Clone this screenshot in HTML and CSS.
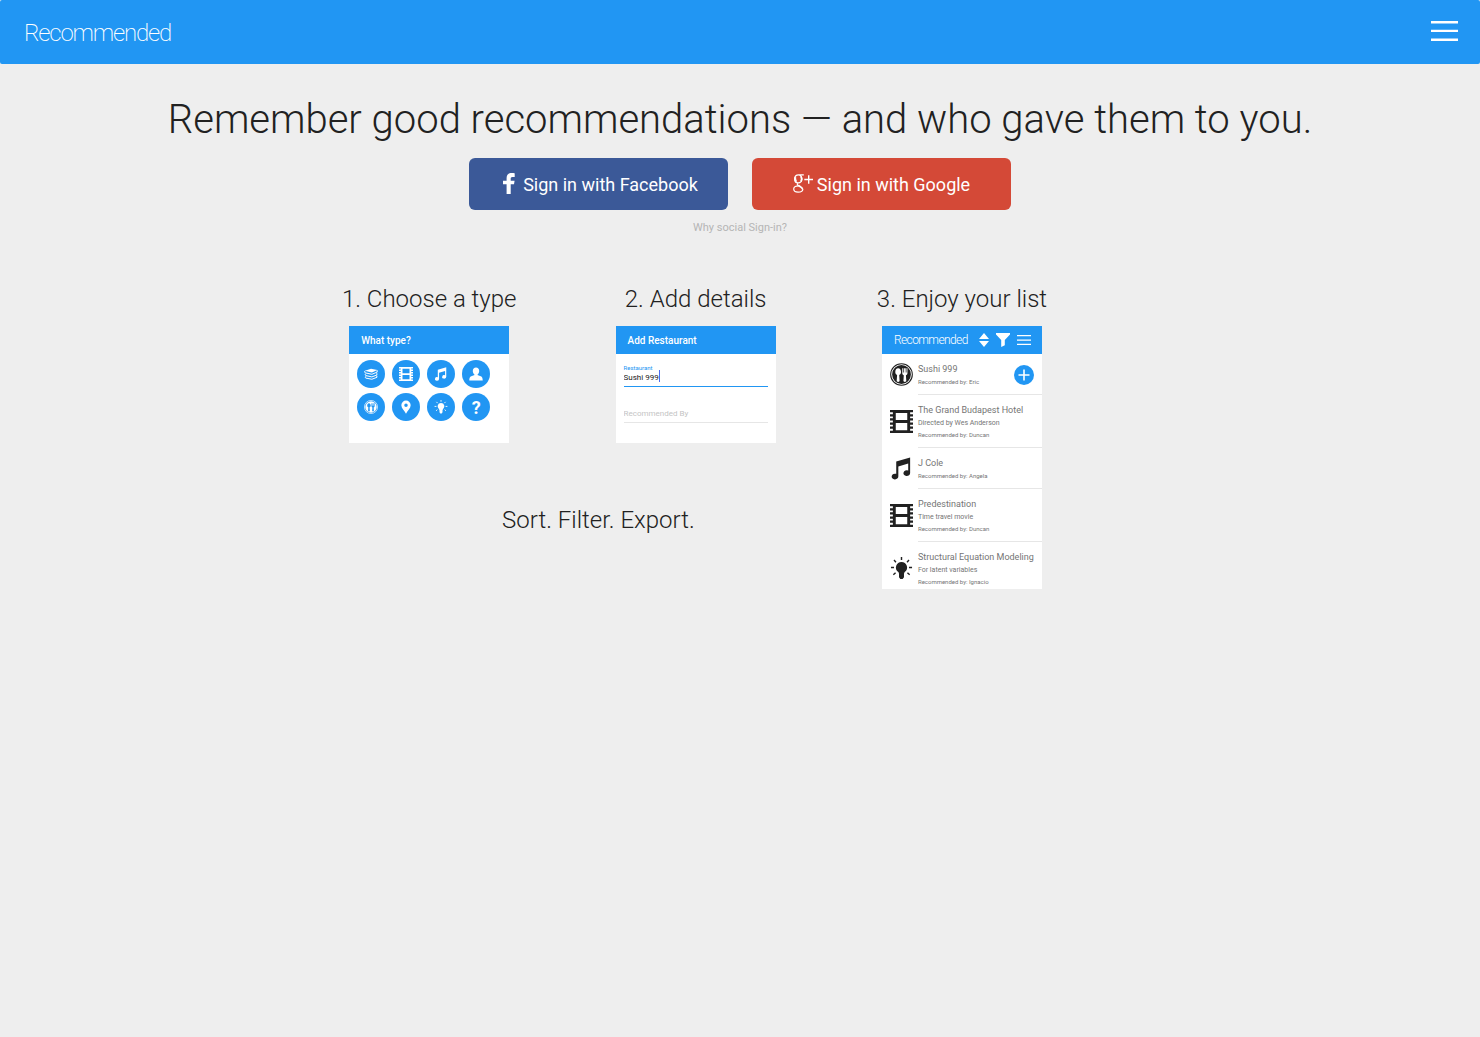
FILE: index.html
```html
<!DOCTYPE html>
<html lang="en">
<head>
<meta charset="utf-8">
<meta name="viewport" content="width=device-width, initial-scale=1">
<title>Recommended</title>
<link rel="stylesheet" href="styles.css">
</head>
<body>
<svg class="sprite" aria-hidden="true">
  <symbol id="film" viewBox="0 0 24 24"><path fill="currentColor" fill-rule="evenodd" d="M0 0h24v24H0zM6 3v7.500h12V3zM6 13.500v7.500h12v-7.500zM0 2.400v2h3v-2zM0 6.700v2h3v-2zM0 11v2h3v-2zM0 15.300v2h3v-2zM0 19.600v2h3v-2zM21 2.400v2h3v-2zM21 6.700v2h3v-2zM21 11v2h3v-2zM21 15.300v2h3v-2zM21 19.600v2h3v-2z"/></symbol>
  <symbol id="music" viewBox="0 0 24 24"><path fill="currentColor" d="M6.500 4.800 21 .5v16.300a3.500 3 0 1 1-2-2.600V6.700L8.700 9.800v10.400a3.500 3 0 1 1-2.200-2.600z"/></symbol>
  <symbol id="bulb" viewBox="0 0 24 24"><path fill="currentColor" d="M12 5.200a5.800 5.800 0 0 1 3.400 10.500c-.7.700-.8 1.500-.8 2.300v3l-1.400 2h-2.400l-1.400-2v-3c0-.8-.1-1.600-.8-2.300A5.800 5.800 0 0 1 12 5.200z"/><path stroke="currentColor" stroke-width="1.500" fill="none" d="M12 0v3M4.200 3.200l2 2.200M19.800 3.200l-2 2.200M1 11h3.200M19.800 11H23M3.500 18.500l2.300-2M20.500 18.500l-2.300-2"/></symbol>
  <symbol id="dining" viewBox="0 0 24 24"><circle cx="12" cy="12" r="11.300" fill="none" stroke="currentColor" stroke-width="1.100"/><path fill="currentColor" fill-rule="evenodd" d="M12 2.200a9.800 9.800 0 1 1 0 19.600 9.800 9.800 0 0 1 0-19.600zM8.500 5.500c-1.900 0-3 1.800-3 3.800 0 1.600.8 2.700 1.900 3.200l-.4 6.100c0 1.600 3 1.600 3 0l-.4-6.100c1.100-.5 1.900-1.600 1.900-3.200 0-2-1.100-3.800-3-3.800zM12.800 5.500v5.200c0 1.100.7 1.700 1.600 2l-.4 5.900c0 1.600 3 1.600 3 0l-.4-5.900c.9-.3 1.600-.9 1.600-2V5.500h-1v4.300h-.8V5.500h-1.700v4.300h-.8V5.500z"/></symbol>
  <symbol id="books" viewBox="0 0 24 24"><path fill="currentColor" d="M1.500 6.500 12 3l11 2.300-9.500 4.200z"/><path fill="none" stroke="currentColor" stroke-width="1.700" d="M2 6.500q-2 2 0 3.500l11.500 2.500 9.500-4M3 11.500q-2 2 0 3.200l10.500 2.300 9-3.500M3 16q-1.500 2 0 3l10.500 2 9-3.500M22.500 5.500v3M22 10.500v3M22 15v2.500"/></symbol>
  <symbol id="person" viewBox="0 0 24 24"><path fill="currentColor" d="M12 1c3.300 0 5.500 2.500 5.500 6 0 2.600-1.300 5-3 6.100v.8l5.600 2.100c2.600 1 3.400 3.400 3.400 7H.5c0-3.600.8-6 3.400-7l5.600-2.100v-.8C7.800 12 6.500 9.600 6.500 7c0-3.500 2.200-6 5.500-6z"/></symbol>
  <symbol id="place" viewBox="0 0 24 24"><path fill="currentColor" fill-rule="evenodd" d="M12 1a8 8 0 0 1 8 8c0 5-5.500 9.500-8 14.500C9.500 18.500 4 14 4 9a8 8 0 0 1 8-8zm0 5a3 3 0 1 0 0 6 3 3 0 0 0 0-6z"/></symbol>
</svg>

<header class="topbar">
  <a class="brand" href="#">Recommended</a>
  <button class="menu" type="button" aria-label="Menu">
    <svg width="27" height="21" viewBox="0 0 27 21"><path fill="#fff" d="M0 0h27v2.400H0zM0 8.700h27v2.400H0zM0 17.600h27V20H0z"/></svg>
  </button>
</header>

<main>
  <h1 class="headline">Remember good recommendations — and who gave them to you.</h1>
  <div class="signin">
    <button class="social facebook" type="button">
      <svg width="12" height="21" viewBox="0 0 12 21" aria-hidden="true"><path fill="#fff" d="M11.700.3v3.600H9.400C8 3.900 7.700 4.600 7.700 5.700v2h3.900l-.6 3.600H7.700V21H3.600v-9.700H0V7.700h3.600V4.900C3.600 1.700 5.500 0 8.600 0c1.400 0 2.600.1 3.100.3z"/></svg>
      Sign in with Facebook
    </button>
    <button class="social google" type="button">
      <svg width="20" height="19" viewBox="0 0 20 19" aria-hidden="true"><g fill="none" stroke="#fff"><path stroke-width="1.200" d="M10.800.9H5.600C3.200.9 1.600 2.600 1.600 5c0 2.200 1.500 3.900 3.500 3.900 2.200 0 3.700-1.500 3.700-3.800C8.800 3 7.500.9 5.600.9M5.300 8.900c-1.500 1.200-1.200 2 .2 2.900"/><path stroke-width="1.800" d="M2.300 3.200c-.3 1.700 0 3.400 1 4.600M8 2.400c.8 1.500.9 3.600 0 5M5.200 11.300c2 1.500 4.300 1.900 4.300 3.900"/><path stroke-width="1.200" d="M6 11.800c-3-.1-5.300.9-5.300 3.300 0 1.900 1.800 3.100 4.400 3.100 2.800 0 4.700-1.200 4.700-3.200"/><path stroke-width="1.400" d="M11.300 5.500H20M15.700 1.300v8.500"/></g></svg>
      Sign in with Google
    </button>
  </div>
  <a class="why" href="#">Why social Sign-in?</a>

  <div class="steps">
    <section class="step">
      <h2>1. Choose a type</h2>
      <div class="shot">
        <div class="shot-bar">What type?</div>
        <div class="types">
          <button type="button" aria-label="Book"><svg><use href="#books"/></svg></button>
          <button type="button" aria-label="Movie"><svg><use href="#film"/></svg></button>
          <button type="button" aria-label="Music"><svg><use href="#music"/></svg></button>
          <button type="button" aria-label="Person"><svg><use href="#person"/></svg></button>
          <button type="button" aria-label="Restaurant"><svg><use href="#dining"/></svg></button>
          <button type="button" aria-label="Place"><svg><use href="#place"/></svg></button>
          <button type="button" aria-label="Idea"><svg><use href="#bulb"/></svg></button>
          <button type="button" aria-label="Other">?</button>
        </div>
      </div>
    </section>

    <section class="step">
      <h2>2. Add details</h2>
      <div class="shot">
        <div class="shot-bar">Add Restaurant</div>
        <form class="details">
          <label for="restaurant">Restaurant</label>
          <div class="entry"><input id="restaurant" type="text" value="Sushi 999"><span class="caret"></span></div>
          <input class="by" type="text" placeholder="Recommended By" aria-label="Recommended By">
        </form>
      </div>
    </section>

    <section class="step list-step">
      <h2>3. Enjoy your list</h2>
      <div class="shot tall">
        <div class="shot-bar app">
          <span class="shot-brand">Recommended</span>
          <svg width="10" height="14" viewBox="0 0 10 14" aria-hidden="true"><path fill="#fff" d="M5 0l5 6H0zM5 14l5-6H0z"/></svg>
          <svg width="14" height="14" viewBox="0 0 14 14" aria-hidden="true"><path fill="#fff" d="M0 0h14v1.500L8.800 7v5.200L5.200 14V7L0 1.500z"/></svg>
          <svg width="14" height="12" viewBox="0 0 14 12" aria-hidden="true"><path fill="#fff" d="M0 1h14v1.300H0zM0 5.400h14v1.300H0zM0 9.800h14v1.300H0z"/></svg>
        </div>
        <ul class="items">
          <li>
            <svg><use href="#dining"/></svg>
            <div class="info"><h3>Sushi 999</h3><p class="by-line">Recommended by: Eric</p></div>
            <button class="add" type="button" aria-label="Add"><svg viewBox="0 0 20 20"><path stroke="#fff" stroke-width="1.600" d="M10 4.500v11M4.500 10h11"/></svg></button>
          </li>
          <li>
            <svg><use href="#film"/></svg>
            <div class="info"><h3>The Grand Budapest Hotel</h3><p>Directed by Wes Anderson</p><p class="by-line">Recommended by: Duncan</p></div>
          </li>
          <li>
            <svg><use href="#music"/></svg>
            <div class="info"><h3>J Cole</h3><p class="by-line">Recommended by: Angela</p></div>
          </li>
          <li>
            <svg><use href="#film"/></svg>
            <div class="info"><h3>Predestination</h3><p>Time travel movie</p><p class="by-line">Recommended by: Duncan</p></div>
          </li>
          <li>
            <svg><use href="#bulb"/></svg>
            <div class="info"><h3>Structural Equation Modeling</h3><p>For latent variables</p><p class="by-line">Recommended by: Ignacio</p></div>
          </li>
        </ul>
      </div>
    </section>

    <h2 class="extras">Sort. Filter. Export.</h2>
  </div>
</main>
</body>
</html>
```
FILE: styles.css
```css
* { box-sizing: border-box; }

body {
  margin: 0;
  background: #eee;
  color: #212121;
  font-family: Roboto, "Liberation Sans", sans-serif;
}

h1, h2, h3, p, ul { margin: 0; padding: 0; font-weight: 300; }
button, input { font-family: inherit; border: 0; padding: 0; margin: 0; }
button { cursor: pointer; }
a { text-decoration: none; }

.sprite { display: none; }

.topbar {
  display: flex;
  align-items: center;
  justify-content: space-between;
  height: 64px;
  padding: 0 22px 0 24px;
  background: #2196f3;
  border-radius: 2px;
}
.brand {
  padding-top: 2px;
  color: #fff;
  font-size: 24px;
  font-weight: 200;
  letter-spacing: -0.05em;
}
.menu { display: flex; padding-bottom: 2px; background: none; }

main { padding-top: 29px; text-align: center; }
.headline { font-size: 40px; line-height: 54px; }

.signin {
  display: flex;
  justify-content: center;
  gap: 24px;
  margin-top: 11px;
}
.social {
  display: flex;
  align-items: center;
  justify-content: center;
  width: 17.5%;
  min-width: 240px;
  height: 52px;
  border-radius: 6px;
  color: #fff;
  font-size: 18px;
}
.social svg { margin-bottom: 2px; }
.facebook { gap: 8px; padding-left: 4px; background: #3b5998; }
.google { gap: 4px; background: #d44937; }

.why {
  display: block;
  margin-top: 11px;
  color: #b5b5b5;
  font-size: 11px;
  line-height: 14px;
}

.steps {
  display: grid;
  grid-template-columns: repeat(3, 30%);
  grid-template-rows: auto 1fr;
  width: 60%;
  min-width: 640px;
  margin: 45px auto 0;
}
.steps h2 { font-size: 24px; line-height: 38px; }
.list-step { grid-column: 3; grid-row: 1 / 3; }
.extras { grid-column: 1 / 3; grid-row: 2; padding: 58px 0 0 72px; }

.shot {
  width: 160px;
  height: 117px;
  margin: 8px auto 0;
  overflow: hidden;
  background: #fff;
  text-align: left;
}
.tall { height: 263px; }
.shot-bar {
  display: flex;
  align-items: center;
  height: 28px;
  padding: 0 12px;
  background: #2196f3;
  color: #fff;
  font-size: 10px;
  font-weight: 500;
}

.types {
  display: grid;
  grid-template-columns: repeat(4, 28px);
  gap: 5px 7px;
  padding: 6px 8px;
}
.types button {
  display: flex;
  align-items: center;
  justify-content: center;
  height: 28px;
  border-radius: 50%;
  background: #2196f3;
  color: #fff;
  font-size: 18px;
  font-weight: 700;
}
.types svg { width: 14px; height: 14px; }

.details { display: flex; flex-direction: column; padding: 10px 8px; }
.details label { color: #2196f3; font-size: 6px; line-height: 8px; }
.entry { position: relative; display: flex; }
.details input {
  width: 100%;
  height: 15px;
  padding-bottom: 4px;
  background: none;
  border-bottom: 1px solid #2196f3;
  color: #212121;
  font-size: 8px;
}
.caret {
  position: absolute;
  left: 35px;
  top: -2px;
  width: 1px;
  height: 12px;
  background: #4a6cf0;
}
.details .by { margin-top: 21px; border-bottom-color: #e6e6e6; }
.by::placeholder { color: #c4c4c4; opacity: 1; }

.app { gap: 7px; padding-right: 11px; }
.app svg { flex: none; }
.shot-brand {
  margin-right: auto;
  font-size: 12px;
  font-weight: 300;
  letter-spacing: -0.05em;
}

.items { list-style: none; }
.items li {
  position: relative;
  display: flex;
  align-items: center;
  padding-left: 8px;
}
.items li > svg { flex: none; width: 23px; height: 23px; margin-right: 5px; }
.info {
  flex: 1;
  padding: 8px 0 7px;
  border-bottom: 1px solid #e6e6e6;
  color: #757575;
  white-space: nowrap;
}
.info h3 { font-size: 9px; font-weight: 400; line-height: 14px; }
.info p { font-size: 7px; font-weight: 400; line-height: 12px; }
.info .by-line { font-size: 6px; line-height: 11px; }
.add {
  position: absolute;
  right: 8px;
  top: 11px;
  display: flex;
  width: 20px;
  height: 20px;
  border-radius: 50%;
  background: #2196f3;
}
```
